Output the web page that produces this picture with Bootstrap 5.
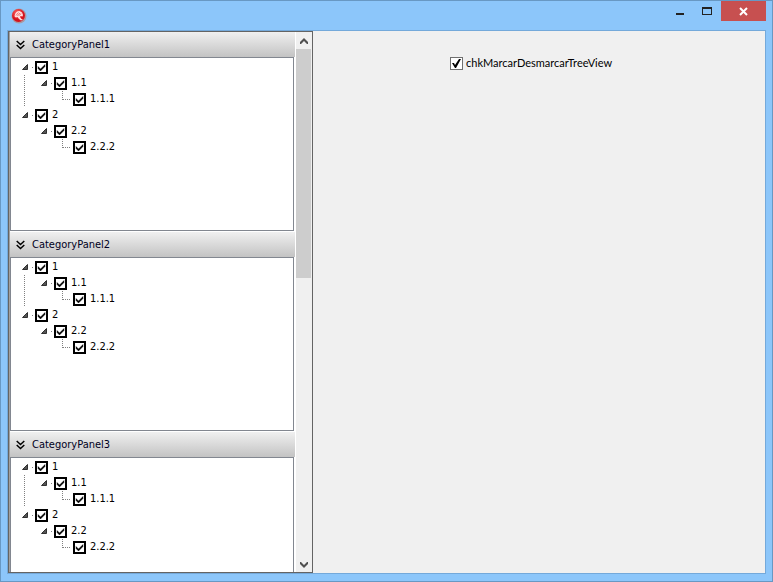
<!DOCTYPE html>
<html lang="pt">
<head>
<meta charset="utf-8">
<meta name="viewport" content="width=device-width, initial-scale=1">
<title>CategoryPanel</title>
<link href="https://cdn.jsdelivr.net/npm/bootstrap@5.3.0/dist/css/bootstrap.min.css" rel="stylesheet">
<style>
body{font:11px/16px "DejaVu Sans Condensed","DejaVu Sans",sans-serif;color:#000}
.win{background:#8cc6fa;border:1px solid #6898c3;padding:0 6px 7px 6px}
.titlebar{height:29px;padding-left:4px}
.appicon{margin-top:7px}
.winbtn{border:0;background:none;padding:0;height:20px;display:flex}
.w-min{width:26px}.w-max{width:27px}
.w-close{width:45px;background:#c75050}
.client{background:#f0f0f0;border:1px solid #74a9da}
.side{width:305px;border:1px solid #646464;background:#fff}
.side-body{border-left:1px solid #a0a0a0}
.cat{height:199px;margin-bottom:1px}
.cat-head{height:25px;width:100%;border:0;padding:0 0 0 6px;gap:7px;background:linear-gradient(#f0f0f0,#c3c3c3);color:#000022;text-align:left}
.tree{height:174px;margin-right:1px;border:1px solid #828790;background:#fff;padding:1px 0 0 10px}
.tree ul{list-style:none;margin:0;padding:0 0 0 19px}
.node{height:16px}
.twist{width:14px;height:16px;flex:none}
.node label{margin-left:4px}
.chk{appearance:none;-webkit-appearance:none;margin:0;width:13px;height:13px;flex:none;border:2px solid #000;background:#fff center/9px 9px no-repeat}
.chk:checked{background-image:url("data:image/svg+xml,%3Csvg xmlns='http://www.w3.org/2000/svg' viewBox='0 0 9 9'%3E%3Cpath d='M1 3.500v2L3.500 8 8 3.500v-2L3.500 6z' stroke='%23000' stroke-width='.4'/%3E%3C/svg%3E")}
.node .chk-plain{border:1px solid #707070}
.chk-plain:checked{background-image:url("data:image/svg+xml,%3Csvg xmlns='http://www.w3.org/2000/svg' viewBox='0 0 9 9'%3E%3Cpath d='M0 4h2l1 2 4-6h2L4 9H3z'/%3E%3C/svg%3E")}
.trunk{background:repeating-linear-gradient(#808080 0 1px,transparent 1px 2px) 3px 0/1px 100% no-repeat}
.node .main-label{font-family:Lato,sans-serif;margin-left:3px}
.main-area{padding:24px 0 0 137px}
.sbar{width:16px;background:#f0f0f0;margin-left:1px}
.sbtn{height:17px;border:0;padding:0;background:#f0f0f0;display:flex}
.thumb{height:229px;background:#cdcdcd;margin-right:1px}
</style>
<script src="https://cdn.jsdelivr.net/npm/bootstrap@5.3.0/dist/js/bootstrap.bundle.min.js"></script>
</head>
<body>
<div class="win vh-100 d-flex flex-column overflow-hidden">
  <header class="titlebar d-flex align-items-start flex-shrink-0">
    <svg class="appicon" width="16" height="16" viewBox="0 0 16 16" aria-hidden="true"><defs><radialGradient id="g" cx=".4" cy=".3"><stop offset="0" stop-color="#f66"/><stop offset="1" stop-color="#d5121c"/></radialGradient></defs><circle cx="8" cy="8" r="7.5" fill="#a99aa4"/><circle cx="7.5" cy="7.500" r="6.500" fill="url(#g)"/><path d="M3.500 8C4 4.500 6 3 8.500 3L11 4.500 12 7 11.500 8.500 9.500 8 9 9 10.500 11 12 11.500 10 12.500 8 11 6.500 9 5 9.500 4 9z" fill="#ffdede"/><path d="M5 7.500l2.500-3M6.500 8l2.500-3M8.500 7.500l1.500-2" stroke="#e44" stroke-width=".7"/></svg>
    <div class="ms-auto d-flex">
      <button class="winbtn w-min" type="button" aria-label="Minimizar"><svg width="26" height="20"><path d="M8 12h8v2H8z" fill="#222"/></svg></button>
      <button class="winbtn w-max" type="button" aria-label="Maximizar"><svg width="27" height="20"><path d="M8 6h10v8H8zM9 8v5h8V8z" fill="#222" fill-rule="evenodd"/></svg></button>
      <button class="winbtn w-close" type="button" aria-label="Fechar"><svg width="45" height="20"><path d="M19 7l7 7M26 7l-7 7" stroke="#fff" stroke-width="2"/></svg></button>
    </div>
  </header>
  <div class="client d-flex flex-grow-1 overflow-hidden">
    <aside class="side d-flex flex-shrink-0 overflow-hidden">
      <div class="side-body flex-grow-1 overflow-hidden" id="cats"></div>
      <div class="sbar d-flex flex-column flex-shrink-0">
        <button class="sbtn" type="button" aria-label="Acima"><svg width="16" height="17"><path d="M4 12v-2l4-4 4 4v2H11L8 9l-3 3z" fill="#505050"/></svg></button>
        <div class="thumb"></div>
        <button class="sbtn mt-auto" type="button" aria-label="Abaixo"><svg width="16" height="17"><path d="M4 7v2l4 4 4-4V7H11L8 10 5 7z" fill="#505050"/></svg></button>
      </div>
    </aside>
    <main class="main-area flex-grow-1">
      <div class="d-flex align-items-center node"><input class="chk chk-plain" type="checkbox" id="all" checked><label class="main-label" for="all">chkMarcarDesmarcarTreeView</label></div>
    </main>
  </div>
</div>
<template id="cat">
  <section class="cat">
    <button class="cat-head d-flex align-items-center" type="button"><svg width="9" height="10" viewBox="0 0 9 10" fill="none" stroke="#000" stroke-width="1.5"><path d="M.7 1l3.800 3.500L8.300 1M.7 5l3.800 3.500L8.300 5"/></svg><span></span></button>
    <div class="tree"></div>
  </section>
</template>
<script>
const arrow='<svg class="twist" viewBox="0 0 14 16" aria-hidden="true"><path d="M1.500 10.500h5v-5z" fill="#555" stroke="#303030"/><path d="M11 8h1v1h-1z" fill="#808080"/></svg>';
const elbow='<svg class="twist" viewBox="0 0 14 16" aria-hidden="true"><path d="M3.500 0v9M4 8.500h8" stroke="#808080" stroke-dasharray="1 1" fill="none"/></svg>';
let n=0;
const row=(t,icon)=>{const id='n'+(++n);return `<div class="node d-flex align-items-center">${icon}<input class="chk" type="checkbox" id="${id}" checked><label for="${id}">${t}</label></div>`};
const branch=(d,cls)=>`<div class="${cls}">${row(d,arrow)}<ul class="${cls?'':'trunk'}"><li>${row(d+'.'+d,arrow)}<ul><li>${row([d,d,d].join('.'),elbow)}</li></ul></li></ul></div>`;
for(let i=1;i<=3;i++){
  const c=document.getElementById('cat').content.cloneNode(true);
  c.querySelector('span').textContent='CategoryPanel'+i;
  c.querySelector('.tree').innerHTML=branch(1,'')+branch(2,'last');
  document.getElementById('cats').append(c);
}
</script>
</body>
</html>
